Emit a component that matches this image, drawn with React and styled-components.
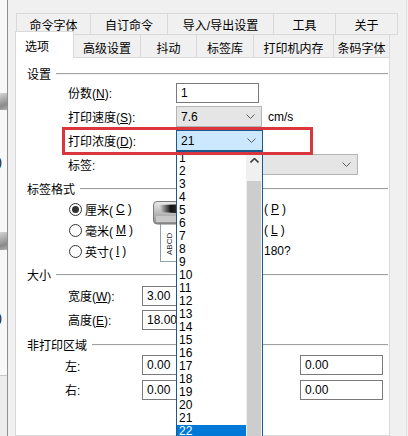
import styled, { createGlobalStyle } from 'styled-components';

const GlobalStyle = createGlobalStyle`
  html, body { margin: 0; padding: 0; }
  body {
    background: #f0f0f0;
    font-family: "Liberation Sans", "Noto Sans CJK SC", sans-serif;
    font-size: 12px;
    color: #000;
  }
`;

const Window = styled.div`
  width: 408px;
  height: 436px;
  overflow: hidden;
  display: flex;
  background: #f0f0f0;
`;

const BackWindow = styled.div`
  width: 7px;
  flex: none;
  background: #f8f8f8;
  border-right: 1px solid #8f8f8f;
  display: flex;
  flex-direction: column;
  overflow: hidden;
`;

const BackBlob = styled.div`
  margin-top: ${p => p.$mt}px;
  height: ${p => p.$h}px;
  background: linear-gradient(160deg, #d4d4d4, #8a8a8a 70%, #b0b0b0);
  flex: none;
`;

const BackParen = styled.div`
  margin-top: ${p => p.$mt}px;
  margin-left: -2px;
  height: 16px;
  line-height: 16px;
  font-size: 12px;
  flex: none;
`;

const BackFoot = styled.div`
  margin-top: ${p => p.$mt}px;
  flex: 1;
  border-top: 1px solid #c8c8c8;
  background: #ececec;
`;

const Main = styled.div`
  flex: 1;
  display: flex;
  flex-direction: column;
  padding: 13px 0 0 7px;
  min-width: 0;
`;

const RightEdge = styled.div`
  width: 1px;
  flex: none;
  border-left: 1px solid #e2e2e2;
`;

const TabRow = styled.div`
  display: flex;
  align-items: flex-end;
  height: ${p => p.$h}px;
  margin-left: ${p => p.$ml || 0}px;
  margin-top: ${p => p.$mt || 0}px;
`;

const Tab = styled.div`
  flex: none;
  box-sizing: border-box;
  width: ${p => p.$w}px;
  height: ${p => (p.$active ? 27 : p.$h)}px;
  margin-bottom: ${p => (p.$active ? -1 : 0)}px;
  position: relative;
  z-index: ${p => (p.$active ? 3 : 1)};
  display: flex;
  align-items: center;
  justify-content: ${p => (p.$active ? 'flex-start' : 'center')};
  padding: ${p => (p.$active ? '0 0 0 9px' : `${p.$pt || 0}px 0 0 0`)};
  background: ${p => (p.$active ? '#fff' : '#f0f0f0')};
  border-top: 1px solid #d9d9d9;
  border-right: 1px solid #d9d9d9;
  border-left: ${p => (p.$first ? '1px solid #d9d9d9' : 'none')};
  border-bottom: ${p => (p.$bottom ? '1px solid #d9d9d9' : 'none')};
  font-size: 12px;
  white-space: nowrap;
`;

const Panel = styled.div`
  flex: 1;
  width: 375px;
  box-sizing: border-box;
  background: #fff;
  border: 1px solid #d9d9d9;
  padding: 0 1px 0 11px;
  display: flex;
  flex-direction: column;
  position: relative;
`;

const GroupHeader = styled.div`
  display: flex;
  align-items: center;
  gap: 5px;
  height: 16px;
  margin-top: ${p => p.$mt}px;
  flex: none;
  white-space: nowrap;
`;

const GroupLine = styled.div`
  flex: 1;
  height: 1px;
  background: #a0a0a0;
  box-shadow: 0 1px 0 #f4f4f4;
`;

const FormRow = styled.div`
  display: flex;
  align-items: center;
  height: ${p => p.$h}px;
  padding-left: ${p => p.$indent}px;
  margin-top: ${p => p.$mt || 0}px;
  position: relative;
  flex: none;
`;

const Label = styled.div`
  width: ${p => p.$w}px;
  flex: none;
  white-space: nowrap;
`;

const TextBox = styled.div`
  box-sizing: border-box;
  width: ${p => p.$w}px;
  height: 20px;
  margin-left: ${p => p.$ml || 0}px;
  border: 1px solid #7a7a7a;
  background: #fff;
  padding-left: 4px;
  display: flex;
  align-items: center;
  flex: none;
`;

const ComboWrap = styled.div`
  position: relative;
  flex: none;
`;

const Combo = styled.div`
  box-sizing: border-box;
  width: ${p => p.$w}px;
  height: 21px;
  border: 1px solid ${p => (p.$focused ? '#1b5a8f' : '#b4b4b4')};
  background: ${p => (p.$focused ? '#cce8ff' : '#e5e5e5')};
  padding: 0 6px 0 4px;
  display: flex;
  align-items: center;
  justify-content: space-between;
`;

const Unit = styled.span`
  margin-left: 6px;
`;

const Highlight = styled.div`
  position: absolute;
  left: 35px;
  top: -2px;
  width: 251px;
  height: 28px;
  box-sizing: border-box;
  border: 3px solid #d9363e;
  z-index: 20;
  pointer-events: none;
`;

const DropList = styled.div`
  position: absolute;
  left: 0;
  top: 21px;
  width: 87px;
  height: 300px;
  box-sizing: border-box;
  border: 1px solid #1b5a8f;
  background: #fff;
  display: flex;
  z-index: 10;
  overflow: hidden;
`;

const Items = styled.div`
  flex: 1;
  display: flex;
  flex-direction: column;
`;

const Item = styled.div`
  height: 13px;
  line-height: 13px;
  padding-left: 2px;
  font-size: 12px;
  flex: none;
  background: ${p => (p.$selected ? '#0078d7' : 'transparent')};
  color: ${p => (p.$selected ? '#fff' : '#000')};
`;

const ScrollBar = styled.div`
  width: 16px;
  flex: none;
  background: #f0f0f0;
  display: flex;
  flex-direction: column;
  align-items: center;
`;

const ScrollArrow = styled.div`
  height: 17px;
  width: 100%;
  display: flex;
  align-items: center;
  justify-content: center;
  flex: none;
`;

const ScrollThumb = styled.div`
  margin-top: 12px;
  width: 14px;
  flex: 1;
  background: #cdcdcd;
`;

const FormatBody = styled.div`
  display: flex;
  margin-top: 2px;
  flex: none;
`;

const Column = styled.div`
  display: flex;
  flex-direction: column;
  box-sizing: border-box;
  width: ${p => (p.$w ? `${p.$w}px` : 'auto')};
  padding-left: ${p => p.$pl || 0}px;
  flex: none;
`;

const RadioRow = styled.div`
  height: 21px;
  display: flex;
  align-items: center;
  gap: 3px;
  white-space: nowrap;
`;

const RadioCircle = styled.span`
  box-sizing: border-box;
  width: 13px;
  height: 13px;
  border-radius: 50%;
  border: 1px solid #333;
  background: #fff;
  display: flex;
  align-items: center;
  justify-content: center;
  flex: none;
  &::after {
    content: '';
    width: 7px;
    height: 7px;
    border-radius: 50%;
    background: ${p => (p.$checked ? '#333' : 'transparent')};
  }
`;

const Picture = styled.div`
  width: 40px;
  height: 64px;
  margin-top: 1px;
  flex: none;
`;

const Chevron = ({ up }) => (
  <svg width="9" height="5" viewBox="0 0 9 5">
    <polyline
      points={up ? '0.5,4.5 4.5,0.5 8.5,4.5' : '0.5,0.5 4.5,4.5 8.5,0.5'}
      fill="none"
      stroke={up ? '#404040' : '#5a5a5a'}
      strokeWidth={up ? 1.6 : 1}
    />
  </svg>
);

const PrinterArt = () => (
  <svg width="40" height="64" viewBox="0 0 40 64">
    <defs>
      <linearGradient id="metal" x1="0" y1="0" x2="0" y2="1">
        <stop offset="0" stopColor="#ececec" />
        <stop offset="0.5" stopColor="#bcbcbc" />
        <stop offset="1" stopColor="#8c8c8c" />
      </linearGradient>
      <linearGradient id="slot" x1="0" y1="0" x2="1" y2="0">
        <stop offset="0" stopColor="#d0d0d0" />
        <stop offset="0.35" stopColor="#111" />
        <stop offset="1" stopColor="#666" />
      </linearGradient>
    </defs>
    <rect x="8.5" y="22.5" width="30" height="39" fill="#fff" stroke="#8fa0a8" />
    <text x="-55" y="20" transform="rotate(-90)" fontSize="8" fontFamily="Liberation Sans, sans-serif" fill="#222">ABCD</text>
    <path d="M1.5 5 Q1.5 1.5 5 1.5 L39 1.5 L39 24 L5 24 Q1.5 24 1.5 20 Z" fill="url(#metal)" stroke="#7a7a7a" />
    <path d="M8 5 L39 4 L39 14 L8 12 Z" fill="url(#slot)" />
    <rect x="4" y="16" width="35" height="6" fill="#c8c8c8" />
  </svg>
);

const acc = (text, key, tail = ':') => (
  <>
    {text}(<u>{key}</u>){tail}
  </>
);

const topTabs = [
  ['命令字体', 75],
  ['自订命令', 77],
  ['导入/导出设置', 106],
  ['工具', 62],
  ['关于', 62],
];

const bottomTabs = [
  ['选项', 59],
  ['高级设置', 67],
  ['抖动', 56],
  ['标签库', 57],
  ['打印机内存', 80],
  ['条码字体', 56],
];

const densities = Array.from({ length: 26 }, (_, i) => i + 1);

export default function App() {
  return (
    <>
      <GlobalStyle />
      <Window>
        <BackWindow>
          <BackBlob $mt={93} $h={17} />
          <BackParen $mt={44}>)</BackParen>
          <BackBlob $mt={62} $h={18} />
          <BackParen $mt={60}>)</BackParen>
          <BackFoot $mt={49} />
        </BackWindow>
        <Main>
          <TabRow $h={22} $ml={1}>
            {topTabs.map(([name, w], i) => (
              <Tab key={name} $w={w} $h={22} $first={i === 0} $bottom>
                {name}
              </Tab>
            ))}
          </TabRow>
          <TabRow $h={23} $mt={-1}>
            {bottomTabs.map(([name, w], i) => (
              <Tab key={name} $w={w} $h={23} $pt={2} $first={i === 0} $active={i === 0}>
                {name}
              </Tab>
            ))}
          </TabRow>
          <Panel>
            <GroupHeader $mt={7}>
              设置
              <GroupLine />
            </GroupHeader>
            <FormRow $h={24} $indent={41} $mt={-0.5}>
              <Label $w={108}>{acc('份数', 'N')}</Label>
              <TextBox $w={83}>1</TextBox>
            </FormRow>
            <FormRow $h={24} $indent={41}>
              <Label $w={108}>{acc('打印速度', 'S')}</Label>
              <Combo $w={86}>
                7.6
                <Chevron />
              </Combo>
              <Unit>cm/s</Unit>
            </FormRow>
            <FormRow $h={24} $indent={41}>
              <Highlight />
              <Label $w={108}>{acc('打印浓度', 'D')}</Label>
              <ComboWrap>
                <Combo $w={87} $focused>
                  21
                  <Chevron />
                </Combo>
                <DropList>
                  <Items>
                    {densities.map(n => (
                      <Item key={n} $selected={n === 22}>
                        {n}
                      </Item>
                    ))}
                  </Items>
                  <ScrollBar>
                    <ScrollArrow>
                      <Chevron up />
                    </ScrollArrow>
                    <ScrollThumb />
                  </ScrollBar>
                </DropList>
              </ComboWrap>
            </FormRow>
            <FormRow $h={24} $indent={41}>
              <Label $w={108}>标签:</Label>
              <Combo $w={182}>
                <span />
                <Chevron />
              </Combo>
            </FormRow>

            <GroupHeader $mt={4}>
              标签格式
              <GroupLine />
            </GroupHeader>
            <FormatBody>
              <Column $w={125} $pl={42}>
                <RadioRow>
                  <RadioCircle $checked />
                  {acc('厘米', 'C', '')}
                </RadioRow>
                <RadioRow>
                  <RadioCircle />
                  {acc('毫米', 'M', '')}
                </RadioRow>
                <RadioRow>
                  <RadioCircle />
                  {acc('英寸', 'I', '')}
                </RadioRow>
              </Column>
              <Picture>
                <PrinterArt />
              </Picture>
              <Column $pl={72}>
                <RadioRow>
                  (<u>P</u>)
                </RadioRow>
                <RadioRow>
                  (<u>L</u>)
                </RadioRow>
                <RadioRow>180?</RadioRow>
              </Column>
            </FormatBody>

            <GroupHeader $mt={2.5}>
              大小
              <GroupLine />
            </GroupHeader>
            <FormRow $h={24} $indent={41} $mt={1.5}>
              <Label $w={74}>{acc('宽度', 'W')}</Label>
              <TextBox $w={70}>3.00</TextBox>
            </FormRow>
            <FormRow $h={24} $indent={41}>
              <Label $w={74}>{acc('高度', 'E')}</Label>
              <TextBox $w={70}>18.00</TextBox>
            </FormRow>

            <GroupHeader $mt={4.5}>
              非打印区域
              <GroupLine />
            </GroupHeader>
            <FormRow $h={24.5} $indent={38} $mt={1}>
              <Label $w={77}>左:</Label>
              <TextBox $w={70}>0.00</TextBox>
              <TextBox $w={83} $ml={88}>0.00</TextBox>
            </FormRow>
            <FormRow $h={24.5} $indent={38}>
              <Label $w={77}>右:</Label>
              <TextBox $w={70}>0.00</TextBox>
              <TextBox $w={83} $ml={88}>0.00</TextBox>
            </FormRow>
          </Panel>
        </Main>
        <RightEdge />
      </Window>
    </>
  );
}
